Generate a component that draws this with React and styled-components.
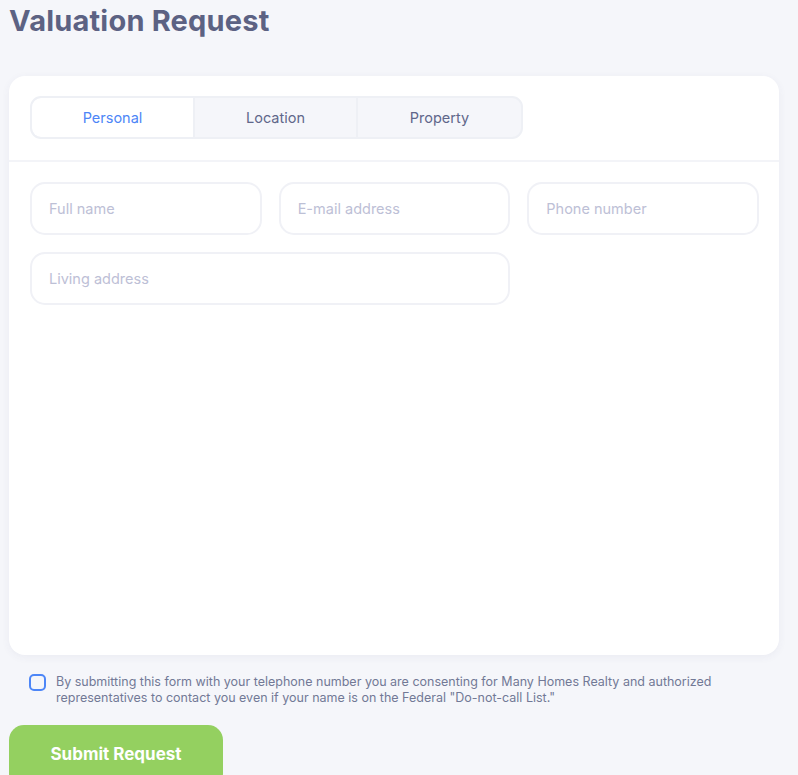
import React from "react";
import styled, { createGlobalStyle } from "styled-components";

const Global = createGlobalStyle`
  html, body { margin: 0; padding: 0; background: #f5f6fa; }
  body { font-family: Inter, "Noto Sans", sans-serif; }
  * { box-sizing: border-box; }
`;

const Page = styled.div`
  padding: 0 19px 0 9px;
  display: flex;
  flex-direction: column;
`;

const Title = styled.h1`
  margin: 0;
  padding-top: 4px;
  height: 76px;
  font-size: 29px;
  font-weight: 700;
  line-height: 34px;
  color: #5c6283;
  letter-spacing: 0.2px;
`;

const Card = styled.div`
  background: #fff;
  border-radius: 16px;
  box-shadow: 0 2px 8px rgba(60, 70, 120, 0.06);
  height: 579px;
  display: flex;
  flex-direction: column;
`;

const TabsBar = styled.div`
  padding: 20px 21px 21px;
  border-bottom: 2px solid #f3f4f8;
`;

const Tabs = styled.div`
  display: grid;
  grid-template-columns: repeat(3, 1fr);
  width: 493px;
  height: 43px;
  background: #f5f6fa;
  border: 2px solid #eef0f5;
  border-radius: 11px;
  overflow: hidden;
`;

const Tab = styled.div`
  display: flex;
  align-items: center;
  justify-content: center;
  font-size: 14.5px;
  color: ${(p) => (p.$active ? "#4d86f7" : "#60678a")};
  background: ${(p) => (p.$active ? "#fff" : "transparent")};
  border-right: ${(p) => (p.$last ? "none" : "2px solid #eef0f5")};
  border-radius: ${(p) => (p.$active ? "9px 0 0 9px" : "0")};
`;

const Fields = styled.div`
  padding: 20px 20px 20px 21px;
  display: grid;
  grid-template-columns: repeat(3, 1fr);
  column-gap: 17px;
  row-gap: 17px;
`;

const Field = styled.div`
  grid-column: span ${(p) => p.$span || 1};
  height: 53px;
  border: 2px solid #f0f1f6;
  border-radius: 15px;
  display: flex;
  align-items: center;
  padding-left: 17px;
  font-size: 14.5px;
  color: #bdc0d6;
`;

const Consent = styled.div`
  display: flex;
  gap: 10px;
  padding: 19px 0 0 20px;
`;

const Box = styled.div`
  flex: none;
  width: 17px;
  height: 17px;
  border: 2px solid #4d86f7;
  border-radius: 5px;
`;

const ConsentText = styled.p`
  margin: 0;
  font-size: 12.5px;
  line-height: 16px;
  color: #727996;
  max-width: 680px;
`;

const Submit = styled.button`
  margin-top: 19px;
  width: 214px;
  height: 64px;
  background: #94d060;
  border: none;
  border-radius: 15px;
  color: #fff;
  font-family: inherit;
  font-size: 17px;
  font-weight: 700;
  padding-bottom: 8px;
`;

export default function App() {
  return (
    <>
      <Global />
      <Page>
        <Title>Valuation Request</Title>
        <Card>
          <TabsBar>
            <Tabs>
              <Tab $active>Personal</Tab>
              <Tab>Location</Tab>
              <Tab $last>Property</Tab>
            </Tabs>
          </TabsBar>
          <Fields>
            <Field>Full name</Field>
            <Field>E-mail address</Field>
            <Field>Phone number</Field>
            <Field $span={2}>Living address</Field>
          </Fields>
        </Card>
        <Consent>
          <Box />
          <ConsentText>
            By submitting this form with your telephone number you are consenting for Many Homes Realty and authorized
            representatives to contact you even if your name is on the Federal "Do-not-call List."
          </ConsentText>
        </Consent>
        <Submit>Submit Request</Submit>
      </Page>
    </>
  );
}
